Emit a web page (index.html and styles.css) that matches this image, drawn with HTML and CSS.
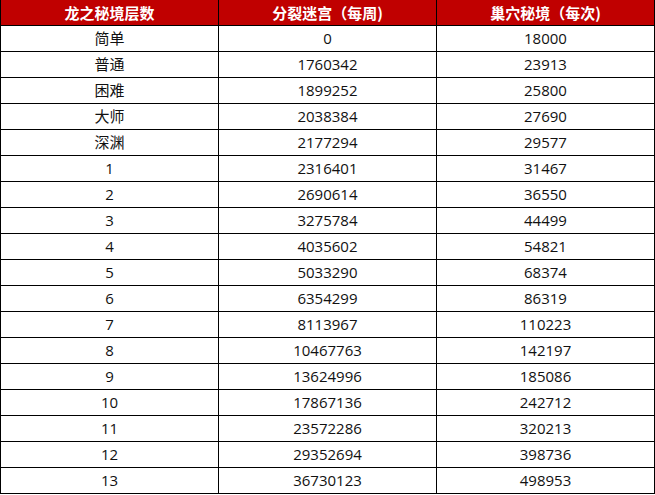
FILE: index.html
```html
<!DOCTYPE html>
<html lang="zh-CN">
<head>
<meta charset="utf-8">
<title>龙之秘境层数</title>
<link rel="stylesheet" href="styles.css">
</head>
<body>
<div class="table">
  <div class="cell head">龙之秘境层数</div><div class="cell head">分裂迷宫（每周)</div><div class="cell head">巢穴秘境（每次)</div>
  <div class="cell">简单</div><div class="cell">0</div><div class="cell">18000</div>
  <div class="cell">普通</div><div class="cell">1760342</div><div class="cell">23913</div>
  <div class="cell">困难</div><div class="cell">1899252</div><div class="cell">25800</div>
  <div class="cell">大师</div><div class="cell">2038384</div><div class="cell">27690</div>
  <div class="cell">深渊</div><div class="cell">2177294</div><div class="cell">29577</div>
  <div class="cell">1</div><div class="cell">2316401</div><div class="cell">31467</div>
  <div class="cell">2</div><div class="cell">2690614</div><div class="cell">36550</div>
  <div class="cell">3</div><div class="cell">3275784</div><div class="cell">44499</div>
  <div class="cell">4</div><div class="cell">4035602</div><div class="cell">54821</div>
  <div class="cell">5</div><div class="cell">5033290</div><div class="cell">68374</div>
  <div class="cell">6</div><div class="cell">6354299</div><div class="cell">86319</div>
  <div class="cell">7</div><div class="cell">8113967</div><div class="cell">110223</div>
  <div class="cell">8</div><div class="cell">10467763</div><div class="cell">142197</div>
  <div class="cell">9</div><div class="cell">13624996</div><div class="cell">185086</div>
  <div class="cell">10</div><div class="cell">17867136</div><div class="cell">242712</div>
  <div class="cell">11</div><div class="cell">23572286</div><div class="cell">320213</div>
  <div class="cell">12</div><div class="cell">29352694</div><div class="cell">398736</div>
  <div class="cell">13</div><div class="cell">36730123</div><div class="cell">498953</div>
</div>
</body>
</html>
```
FILE: styles.css
```css
html, body {
  margin: 0;
  padding: 0;
  background: #fff;
}
.table {
  display: grid;
  grid-template-columns: 218px 218px 218px;
  grid-auto-rows: 26px;
  width: 654px;
  border-left: 1px solid #000;
  font-family: "Open Sans", "Noto Sans CJK SC", sans-serif;
  font-size: 15px;
  color: #111;
}
.cell {
  box-sizing: border-box;
  border-right: 1px solid #000;
  border-bottom: 1px solid #000;
  display: flex;
  align-items: center;
  justify-content: center;
  line-height: 1;
  white-space: nowrap;
}
.head {
  background: #c00000;
  color: #fff;
  font-weight: bold;
  font-family: "Noto Sans CJK SC", sans-serif;
  font-size: 15px;
}
```
